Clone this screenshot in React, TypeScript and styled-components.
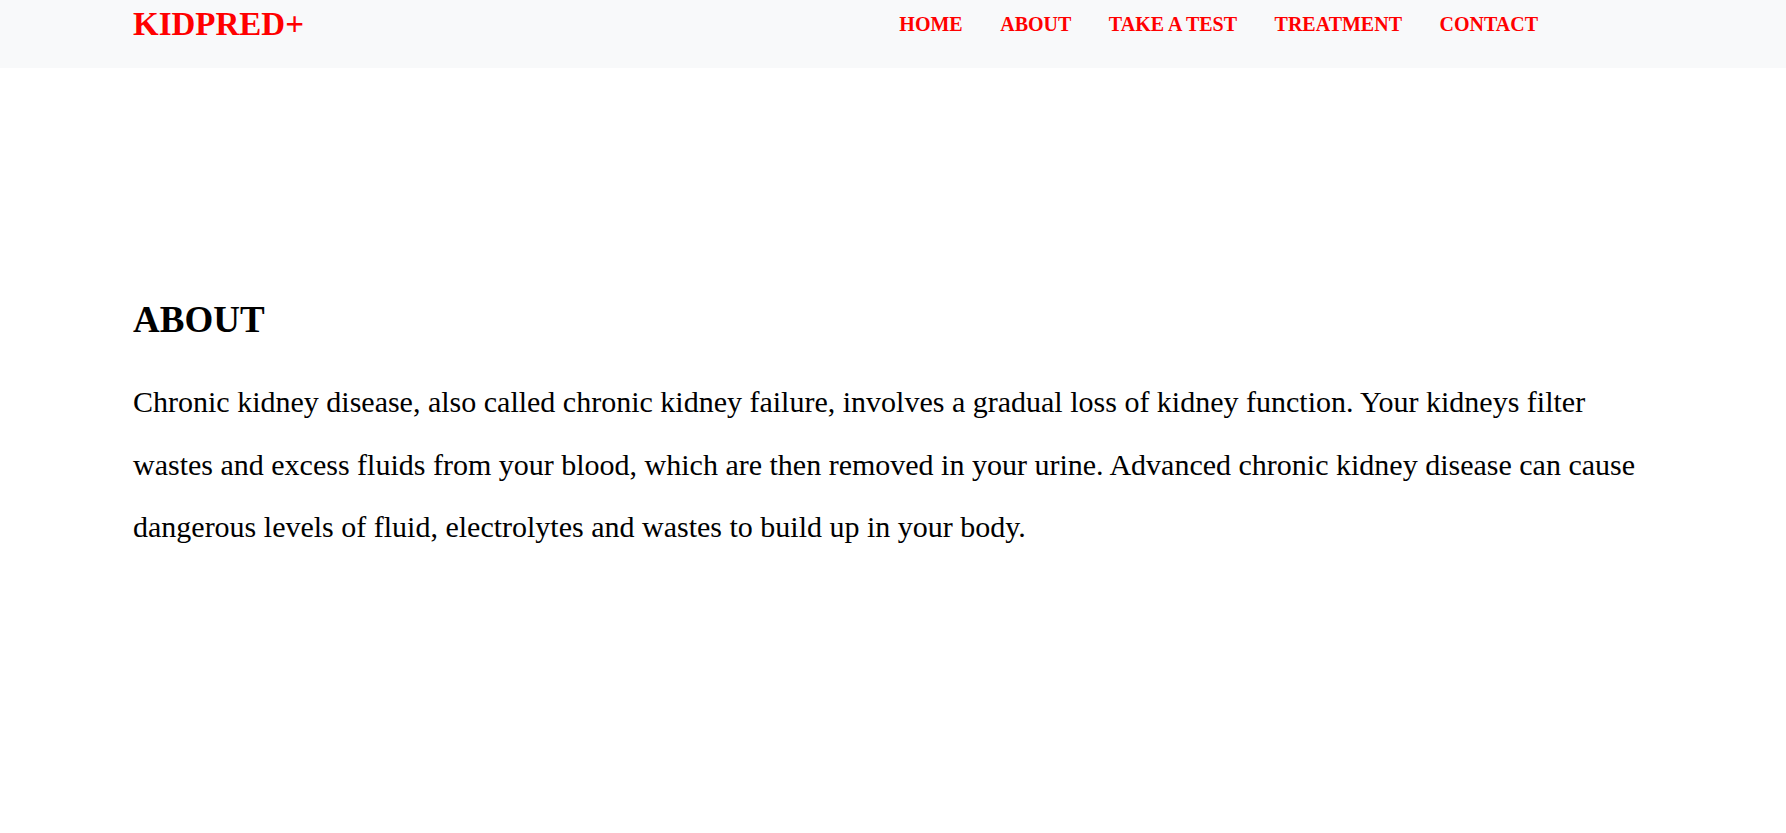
import { createGlobalStyle, styled } from "styled-components";

const GlobalStyle = createGlobalStyle`
  * {
    box-sizing: border-box;
  }
  body {
    margin: 0;
    background: #fff;
    font-family: "Liberation Serif", "Times New Roman", serif;
  }
`;

const Header = styled.header`
  height: 68px;
  background: #f8f9fa;
  padding: 0 248px 0 133px;
  display: flex;
  justify-content: space-between;
  align-items: flex-start;
`;

const Logo = styled.a`
  margin-top: 6px;
  font-size: 33px;
  font-weight: 700;
  color: #ff0000;
  text-decoration: none;
`;

const NavList = styled.ul`
  list-style: none;
  margin: 13px 0 0;
  padding: 0;
  display: flex;
  gap: 37.5px;
`;

const NavLink = styled.a`
  font-size: 20px;
  font-weight: 700;
  color: #ff0000;
  text-decoration: none;
`;

const Main = styled.main`
  padding: 230px 133px 0;
`;

const Title = styled.h2`
  margin: 0 0 30px;
  font-size: 37px;
  font-weight: 700;
  color: #000;
`;

const Text = styled.p`
  margin: 0;
  font-size: 30px;
  line-height: 62.6px;
  color: #000;
`;

const links = ["HOME", "ABOUT", "TAKE A TEST", "TREATMENT", "CONTACT"];

function App() {
  return (
    <>
      <GlobalStyle />
      <Header>
        <Logo href="#">KIDPRED+</Logo>
        <NavList>
          {links.map((link) => (
            <li key={link}>
              <NavLink href="#">{link}</NavLink>
            </li>
          ))}
        </NavList>
      </Header>
      <Main>
        <Title>ABOUT</Title>
        <Text>
          Chronic kidney disease, also called chronic kidney failure, involves a gradual loss of kidney function. Your
          kidneys filter wastes and excess fluids from your blood, which are then removed in your urine. Advanced chronic
          kidney disease can cause dangerous levels of fluid, electrolytes and wastes to build up in your body.
        </Text>
      </Main>
    </>
  );
}

export default App;
